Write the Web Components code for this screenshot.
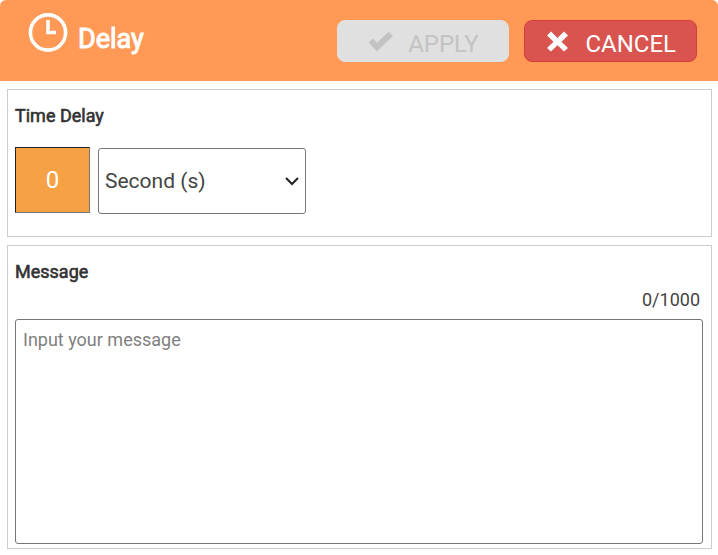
<!DOCTYPE html>
<html lang="en">
<head>
<meta charset="utf-8">
<title>Delay</title>
<style>
  body {
    margin: 0;
    background: #fff;
    color: #333;
    font-family: Roboto, "Liberation Sans", sans-serif;
    --header-color: #ff9955;
    --accent-color: #f7a145;
    --danger-color: #d9534f;
    --danger-border: #d43f3a;
    --line-color: #ccc;
    --field-border: #767676;
  }
</style>
</head>
<body>

<delay-dialog></delay-dialog>

<script>
const dialogHeaderTemplate = `
<style>
  :host {
    display: flex;
    box-sizing: border-box;
    height: 81px;
    padding: 0 21px 0 28px;
    align-items: center;
    justify-content: space-between;
    background-color: var(--header-color);
    border-radius: 6px 6px 0 0;
    color: #fff;
  }

  .title {
    display: flex;
    align-items: center;
    gap: 10px;
    padding-bottom: 16px;
  }

  svg {
    width: 40px;
    height: 40px;
  }

  h1 {
    margin: 0;
    padding-top: 12px;
    font-size: 27px;
    line-height: 32px;
    font-weight: 400;
    -webkit-text-stroke: 1px currentColor;
  }

  .actions {
    display: flex;
    gap: 15px;
  }
</style>

<div class="title">
  <svg viewBox="0 0 40 40" fill="none" stroke="#fff" aria-hidden="true">
    <circle cx="20" cy="19.5" r="17.6" stroke-width="3.6"/>
    <path d="M20 7V19.5h8" stroke-width="3.6"/>
  </svg>
  <h1><slot></slot></h1>
</div>
<div class="actions"><slot name="actions"></slot></div>
`;

const actionButtonTemplate = `
<style>
  :host {
    display: block;
  }

  button {
    display: flex;
    box-sizing: border-box;
    min-width: 172px;
    height: 42px;
    padding: 6px 20px 0;
    align-items: center;
    justify-content: center;
    gap: 14px;
    border: 1px solid var(--danger-border);
    border-radius: 8px;
    background-color: var(--danger-color);
    color: #fff;
    font-family: inherit;
    font-size: 24px;
    line-height: 28px;
  }

  button:disabled {
    border-color: #e0e0e0;
    background-color: #e0e0e0;
    color: #c3c3c3;
  }

  svg {
    width: 26px;
    height: 26px;
    margin-bottom: 4px;
  }
</style>

<button type="button">
  <svg viewBox="0 0 26 26" fill="currentColor" aria-hidden="true"><path></path></svg>
  <slot></slot>
</button>
`;

const formPanelTemplate = `
<style>
  :host {
    display: block;
    padding: 16px 8px 4px 7px;
    border: 1px solid var(--line-color);
  }
</style>

<slot></slot>
`;

const timeDelayTemplate = `
<style>
  :host {
    display: block;
    padding-bottom: 18px;
  }

  .label {
    display: block;
    margin-bottom: 21px;
    font-size: 18px;
    line-height: 20px;
    -webkit-text-stroke: 0.6px currentColor;
  }

  .fields {
    display: flex;
    align-items: flex-start;
    gap: 8px;
  }

  input {
    box-sizing: border-box;
    width: 75px;
    height: 66px;
    padding: 0;
    border: 1px solid;
    border-color: #222 #767676 #767676 #222;
    background-color: var(--accent-color);
    color: #fff;
    font-family: inherit;
    font-size: 24px;
    text-align: center;
  }

  .unit {
    display: grid;
    width: 208px;
    margin-top: 1px;
    align-items: center;
  }

  select, .unit svg {
    grid-area: 1 / 1;
  }

  select {
    appearance: none;
    height: 66px;
    padding: 0 6px;
    border: 1px solid var(--field-border);
    border-radius: 3px;
    background-color: #fff;
    color: #444;
    font-family: inherit;
    font-size: 21px;
  }

  .unit svg {
    width: 14px;
    height: 10px;
    margin-right: 7px;
    justify-self: end;
    pointer-events: none;
  }
</style>

<label class="label" for="amount">Time Delay</label>
<div class="fields">
  <input id="amount" type="text" inputmode="numeric" value="0">
  <div class="unit">
    <select aria-label="Time unit">
      <option>Second (s)</option>
      <option>Minute (s)</option>
      <option>Hour (s)</option>
    </select>
    <svg viewBox="0 0 14 10" fill="none" stroke="#222" stroke-width="2" aria-hidden="true">
      <path d="M1 2l6 6 6-6"/>
    </svg>
  </div>
</div>
`;

const messageFieldTemplate = `
<style>
  :host {
    display: block;
  }

  label {
    display: block;
    font-size: 18px;
    line-height: 20px;
    -webkit-text-stroke: 0.6px currentColor;
  }

  .counter {
    margin: 8px 3px 9px 0;
    font-size: 18px;
    line-height: 20px;
    text-align: right;
    color: #444;
  }

  textarea {
    display: block;
    box-sizing: border-box;
    width: 100%;
    height: 225px;
    padding: 9px 7px;
    border: 1px solid var(--field-border);
    border-radius: 3px;
    resize: none;
    font-family: inherit;
    font-size: 18px;
    line-height: 22px;
  }

  textarea::placeholder {
    color: #808080;
  }
</style>

<label for="message">Message</label>
<div class="counter"></div>
<textarea id="message" maxlength="1000" placeholder="Input your message"></textarea>
`;

const delayDialogTemplate = `
<style>
  :host {
    display: block;
  }

  main {
    display: flex;
    flex-direction: column;
    gap: 8px;
    padding: 8px 6px 6px 7px;
  }
</style>

<dialog-header>
  Delay
  <action-button slot="actions" icon="check" disabled>APPLY</action-button>
  <action-button slot="actions" icon="cross">CANCEL</action-button>
</dialog-header>
<main>
  <form-panel><time-delay></time-delay></form-panel>
  <form-panel><message-field></message-field></form-panel>
</main>
`;

const buttonIcons = {
  check: "M0.6 13.8L4.8 9.6L9 13.8L20.6 2.8L25 7L9 22.2Z",
  cross: "M6 2.5L12.5 9L19 2.5L23 6.5L16.5 12.7L23 19L19 22.5L12.5 16.3L6 22.5L2 19L8.5 12.7L2 6.5Z",
};

class BaseElement extends HTMLElement {
  constructor(html) {
    super();

    const template = document.createElement("template");
    template.innerHTML = html;
    this._shadowRoot = this.attachShadow({ mode: "open" });
    this._shadowRoot.appendChild(template.content.cloneNode(true));
  }
}

class DialogHeader extends BaseElement {
  constructor() {
    super(dialogHeaderTemplate);
  }
}

///NOTE: how to use  <action-button icon="check" disabled>APPLY</action-button>
class ActionButton extends BaseElement {
  constructor() {
    super(actionButtonTemplate);
  }

  connectedCallback() {
    const icon = this.getAttribute("icon");

    this._shadowRoot.querySelector("path").setAttribute("d", buttonIcons[icon]);
    this._shadowRoot.querySelector("button").disabled = this.hasAttribute("disabled");
  }
}

class FormPanel extends BaseElement {
  constructor() {
    super(formPanelTemplate);
  }
}

class TimeDelay extends BaseElement {
  constructor() {
    super(timeDelayTemplate);
  }
}

class MessageField extends BaseElement {
  constructor() {
    super(messageFieldTemplate);
  }

  connectedCallback() {
    this._shadowRoot.querySelector("textarea").addEventListener("input", () => this.render());
    this.render();
  }

  render() {
    const textarea = this._shadowRoot.querySelector("textarea");
    const counter = this._shadowRoot.querySelector(".counter");

    counter.textContent = `${textarea.value.length}/${textarea.maxLength}`;
  }
}

class DelayDialog extends BaseElement {
  constructor() {
    super(delayDialogTemplate);
  }
}

customElements.define("dialog-header", DialogHeader);
customElements.define("action-button", ActionButton);
customElements.define("form-panel", FormPanel);
customElements.define("time-delay", TimeDelay);
customElements.define("message-field", MessageField);
customElements.define("delay-dialog", DelayDialog);
</script>
</body>
</html>
